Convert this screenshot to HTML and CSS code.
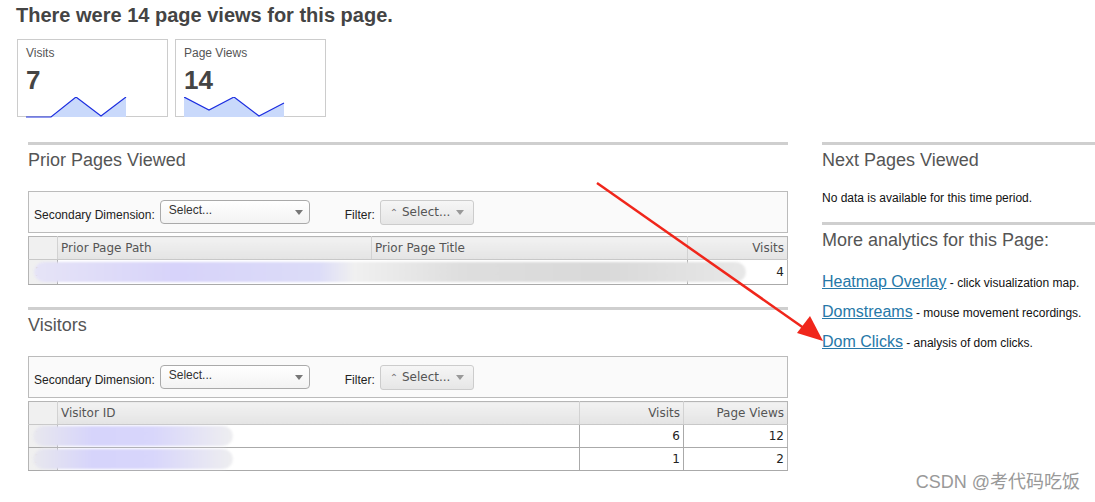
FILE: index.html
```html
<!DOCTYPE html>
<html lang="en">
<head>
  <meta charset="UTF-8">
  <title>Page Analytics</title>
  <link rel="stylesheet" href="styles.css">
</head>
<body>

<div class="page">
  <h1 class="title">There were 14 page views for this page.</h1>

  <div class="stats">
    <div class="stat">
      <div class="stat-label">Visits</div>
      <div class="stat-value">7</div>
      <svg class="spark" width="110" height="22" viewBox="0 0 110 22">
        <polygon points="0,20 25,20 50,0 75,19 100,0 100,20" fill="#c9d9fb"/>
        <polyline points="0,20 25,20 50,0 75,19 100,0" fill="none" stroke="#1c2ee0" stroke-width="1.2"/>
      </svg>
    </div>
    <div class="stat">
      <div class="stat-label">Page Views</div>
      <div class="stat-value">14</div>
      <svg class="spark" width="110" height="22" viewBox="0 0 110 22">
        <polygon points="0,0 25,13 50,0 75,19 100,6 100,20 0,20" fill="#c9d9fb"/>
        <polyline points="0,0 25,13 50,0 75,19 100,6" fill="none" stroke="#1c2ee0" stroke-width="1.2"/>
      </svg>
    </div>
  </div>

  <div class="columns">
    <div class="left">
      <div class="section prior">
        <h2 class="section-title">Prior Pages Viewed</h2>
        <div class="toolbar">
          <span class="tb-label">Secondary Dimension:</span>
          <div class="select">Select...<span class="caret"></span></div>
          <span class="tb-label filter-label">Filter:</span>
          <div class="filter-btn"><span class="up">&#8963;</span> Select... <span class="caret small"></span></div>
        </div>
        <table class="grid">
          <thead>
            <tr>
              <th class="num"></th>
              <th class="path">Prior Page Path</th>
              <th class="ttl">Prior Page Title</th>
              <th class="right">Visits</th>
            </tr>
          </thead>
          <tbody>
            <tr class="tall">
              <td class="num">1</td>
              <td colspan="2" class="blurred"><div class="smudge wide"></div></td>
              <td class="right">4</td>
            </tr>
          </tbody>
        </table>
      </div>

      <div class="section visitors">
        <h2 class="section-title">Visitors</h2>
        <div class="toolbar">
          <span class="tb-label">Secondary Dimension:</span>
          <div class="select">Select...<span class="caret"></span></div>
          <span class="tb-label filter-label">Filter:</span>
          <div class="filter-btn"><span class="up">&#8963;</span> Select... <span class="caret small"></span></div>
        </div>
        <table class="grid">
          <thead>
            <tr>
              <th class="num"></th>
              <th class="vid">Visitor ID</th>
              <th class="right vcol">Visits</th>
              <th class="right pcol">Page Views</th>
            </tr>
          </thead>
          <tbody>
            <tr>
              <td class="num">1</td>
              <td class="blurred"><div class="smudge short"></div></td>
              <td class="right">6</td>
              <td class="right">12</td>
            </tr>
            <tr>
              <td class="num">2</td>
              <td class="blurred"><div class="smudge short"></div></td>
              <td class="right">1</td>
              <td class="right">2</td>
            </tr>
          </tbody>
        </table>
      </div>
    </div>

    <div class="right-col">
      <div class="section">
        <h2 class="section-title">Next Pages Viewed</h2>
        <p class="note">No data is available for this time period.</p>
      </div>
      <div class="section">
        <h2 class="section-title">More analytics for this Page:</h2>
        <ul class="links">
          <li><a href="#">Heatmap Overlay</a> - click visualization map.</li>
          <li><a href="#">Domstreams</a> - mouse movement recordings.</li>
          <li><a href="#">Dom Clicks</a> - analysis of dom clicks.</li>
        </ul>
      </div>
    </div>
  </div>
</div>

<svg class="arrow" width="1095" height="502" viewBox="0 0 1095 502">
  <line x1="597" y1="183" x2="808" y2="331" stroke="#f0261b" stroke-width="2.5"/>
  <polygon points="823,341 797,333 810,316" fill="#f0261b"/>
</svg>

<div class="watermark">CSDN @考代码吃饭</div>

</body>
</html>
```

FILE: styles.css
```css
body {
  margin: 0;
  font-family: "Liberation Sans", Arial, sans-serif;
  background: white;
  color: #444;
  width: 1095px;
  height: 502px;
  overflow: hidden;
  position: relative;
}

.page {
  padding: 3px 0 0 16px;
}

.title {
  margin: 0;
  font-size: 20px;
  line-height: 24px;
  color: #444;
}

.stats {
  display: flex;
  gap: 7px;
  margin: 12px 0 0 1px;
}

.stat {
  width: 149px;
  height: 76px;
  border: 1px solid #ccc;
  padding: 0;
  position: relative;
}

.stat-label {
  font-size: 12px;
  color: #555;
  margin: 6px 0 0 8px;
}

.stat-value {
  font-size: 26px;
  font-weight: bold;
  color: #444;
  margin: 5px 0 0 8px;
  line-height: 30px;
}

.spark {
  display: block;
  margin: 2px 0 0 8px;
}

.columns {
  display: flex;
  gap: 34px;
  margin: 25px 0 0 12px;
}

.left {
  width: 760px;
}

.right-col {
  width: 273px;
}

.section {
  border-top: 3px solid #cfcfcf;
}

.section-title {
  margin: 0;
  font-size: 18px;
  font-weight: normal;
  color: #555;
  line-height: 22px;
  padding-top: 4px;
}

.toolbar {
  margin-top: 20px;
  height: 40px;
  border: 1px solid #bbb;
  background: #fafafa;
  display: flex;
  align-items: center;
  padding: 0 0 0 5px;
  font-size: 12px;
}

.tb-label {
  color: #222;
  padding-top: 5px;
}

.select {
  position: relative;
  width: 140px;
  height: 22px;
  margin-left: 5px;
  border: 1px solid #aaa;
  border-radius: 4px;
  background: linear-gradient(#fff, #f3f3f3);
  padding-left: 8px;
  line-height: 18px;
  color: #333;
}

.caret {
  position: absolute;
  right: 6px;
  top: 9px;
  border-left: 4px solid transparent;
  border-right: 4px solid transparent;
  border-top: 5px solid #777;
}

.caret.small {
  position: static;
  display: inline-block;
  vertical-align: middle;
  margin-left: 2px;
  border-top-color: #999;
}

.filter-label {
  margin-left: 35px;
}

.filter-btn {
  margin-left: 5px;
  height: 23px;
  padding: 0 9px;
  border: 1px solid #ccc;
  border-radius: 3px;
  background: linear-gradient(#f6f6f6, #e6e6e6);
  line-height: 23px;
  color: #555;
  font-family: "DejaVu Sans", sans-serif;
  font-size: 12px;
}

.up {
  font-size: 10px;
  color: #777;
}

.grid {
  margin-top: 3px;
  width: 760px;
  table-layout: fixed;
  border-collapse: collapse;
  border: 1px solid #b5b5b5;
  font-family: "DejaVu Sans", sans-serif;
  font-size: 12px;
  color: #555;
}

.grid th {
  height: 22px;
  font-weight: normal;
  text-align: left;
  padding: 0 3px;
  background: linear-gradient(#f2f2f2, #e4e4e4);
  border-left: 1px solid #d2d2d2;
  border-bottom: 1px solid #c8c8c8;
}

.grid td {
  height: 22px;
  padding: 0 3px;
  border-left: 1px solid #aaa;
  border-bottom: 1px solid #aaa;
  color: #222;
}

.grid .tall td {
  height: 24px;
}

.grid .num {
  width: 28px;
  padding: 0;
  border-left: none;
  background: #f0f0f0;
  color: #555;
  text-indent: 6px;
}

.grid .right {
  text-align: right;
}

.path {
  width: 307px;
}

.ttl {
  width: 309px;
}

.vcol,
.pcol {
  width: 97px;
}

.blurred {
  position: relative;
}

.grid td.blurred {
  padding: 0;
}

.smudge {
  height: 20px;
  border-radius: 10px;
  filter: blur(1px);
}

.smudge.wide {
  margin-left: -24px;
  width: 712px;
  background: linear-gradient(90deg, #e6e4f7 0%, #d7d3fa 20%, #dcdcf8 40%, #f0f0f0 45%, #dedede 60%, #d9d9d9 80%, #e8e8e8 100%);
}

.smudge.short {
  margin-left: -25px;
  width: 200px;
  background: linear-gradient(90deg, #e8e8ee 0%, #d6d4fb 30%, #d8d6fb 60%, #eeeef0 100%);
}

.visitors {
  margin-top: 22px;
}

.note {
  margin: 20px 0 0 0;
  font-size: 12px;
  color: #111;
}

.right-col .section + .section {
  margin-top: 17px;
}

.links {
  list-style: none;
  margin: 21px 0 0 0;
  padding: 0;
  font-size: 12px;
  color: #111;
}

.links li {
  height: 30px;
  line-height: 20px;
}

.links a {
  font-size: 16px;
  color: #2678a8;
}

.arrow {
  position: absolute;
  top: 0;
  left: 0;
  pointer-events: none;
}

.watermark {
  position: absolute;
  right: 15px;
  bottom: 9px;
  font-size: 18px;
  color: #999;
  font-family: "Liberation Sans", "Noto Sans CJK SC", sans-serif;
}
```
